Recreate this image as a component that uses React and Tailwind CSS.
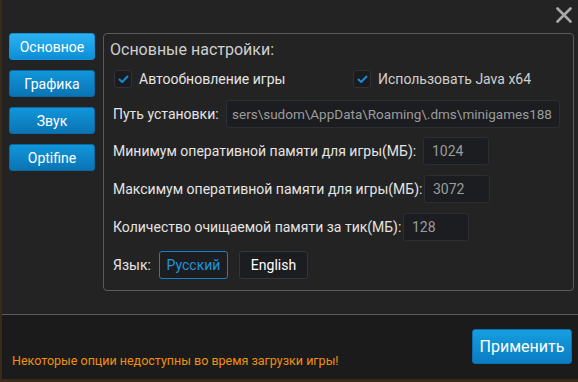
import { useState } from 'react';

const tabs = ['Основное', 'Графика', 'Звук', 'Optifine'];

const Check = ({ checked }) => (
    <span className="w-[18px] h-[18px] rounded-[3px] bg-[#1a1c1f] border border-[#303236] flex items-center justify-center">
        {checked && (
            <svg width="11" height="9" viewBox="0 0 11 9">
                <path d="M1.5 4.5 L4.2 7 L9.5 1.5" fill="none" stroke="#1b8ad4" strokeWidth="2" strokeLinecap="round" strokeLinejoin="round" />
            </svg>
        )}
    </span>
);

const Field = ({ value, className }) => (
    <div className={`h-[28px] rounded-[3px] bg-[#1b1d20] border border-[#2c2e31] text-[#9c9c9c] flex items-center overflow-hidden whitespace-nowrap ${className}`}>
        {value}
    </div>
);

const App = () => {
    const [tab, setTab] = useState(0);
    const [lang, setLang] = useState('ru');

    return (
        <div className="w-[578px] h-[382px] bg-[#3a2a19] flex flex-col overflow-hidden" style={{ fontFamily: 'Roboto, "Noto Sans", sans-serif' }}>
            <div className="ml-[2px] h-[379px] flex flex-col">
                {/* верх */}
                <div className="relative h-[315px] bg-[#232323] border-b border-[#5c5c5c] flex pt-[33px] pl-[7px]">
                    <svg className="absolute right-[6px] top-[7px]" width="16" height="16" viewBox="0 0 16 16">
                        <path d="M1.5 1.5 L14.5 14.5 M14.5 1.5 L1.5 14.5" stroke="#a9a9a9" strokeWidth="2.6" strokeLinecap="round" />
                    </svg>

                    <div className="w-[86px] flex flex-col gap-[10px]">
                        {tabs.map((t, i) => (
                            <button
                                key={t}
                                onClick={() => setTab(i)}
                                className={`h-[27px] rounded-[3px] border text-white text-[14px] leading-none ${i === tab ? 'bg-gradient-to-b from-[#2bb2f2] to-[#0b8ed6] border-[#1590d4]' : 'bg-gradient-to-b from-[#1196da] to-[#0a74b4] border-[#0b6aa6]'}`}
                            >
                                {t}
                            </button>
                        ))}
                    </div>

                    <div className="ml-[8px] w-[471px] h-[258px] border border-[#5a5a5a] rounded-[4px] flex flex-col pt-[5px] text-[#e4e4e4] text-[14px] whitespace-nowrap">
                        <div className="pl-[6px] h-[22px] flex items-center text-[16px] text-[#cfcfcf]">Основные настройки:</div>

                        <div className="mt-[9px] h-[18px] flex items-center pl-[10px]">
                            <div className="w-[239px] flex items-center gap-[7px]">
                                <Check checked />
                                <span>Автообновление игры</span>
                            </div>
                            <div className="flex items-center gap-[7px]">
                                <Check checked />
                                <span className="text-[#cfcfcf]">Использовать Java x64</span>
                            </div>
                        </div>

                        <div className="mt-[12px] flex items-center pl-[9px]">
                            <span className="w-[113px]">Путь установки:</span>
                            <Field value="sers\sudom\AppData\Roaming\.dms\minigames188" className="w-[334px] pl-[5px] text-[13.5px]" />
                        </div>

                        <div className="mt-[9px] flex items-center pl-[9px]">
                            <span className="w-[310px]">Минимум оперативной памяти для игры(МБ):</span>
                            <Field value="1024" className="w-[66px] px-[8px] text-[14px]" />
                        </div>

                        <div className="mt-[10px] flex items-center pl-[9px]">
                            <span className="w-[311px]">Максимум оперативной памяти для игры(МБ):</span>
                            <Field value="3072" className="w-[66px] px-[8px] text-[14px]" />
                        </div>

                        <div className="mt-[10px] flex items-center pl-[9px]">
                            <span className="w-[290px]">Количество очищаемой памяти за тик(МБ):</span>
                            <Field value="128" className="w-[66px] px-[8px] text-[14px]" />
                        </div>

                        <div className="mt-[10px] flex items-center pl-[9px] gap-[11px]">
                            <span className="w-[35px]">Язык:</span>
                            <button
                                onClick={() => setLang('ru')}
                                className={`h-[28px] w-[69px] rounded-[3px] bg-[#1b1d20] border text-[14px] ${lang === 'ru' ? 'border-[#1a80c4] text-[#1e95dc]' : 'border-[#34363a] text-white'}`}
                            >
                                Русский
                            </button>
                            <button
                                onClick={() => setLang('en')}
                                className={`h-[28px] w-[69px] rounded-[3px] bg-[#1b1d20] border text-[14px] ${lang === 'en' ? 'border-[#1a80c4] text-[#1e95dc]' : 'border-[#34363a] text-white'}`}
                            >
                                English
                            </button>
                        </div>
                    </div>
                </div>

                {/* низ */}
                <div className="flex-1 bg-[#1b1b1b] flex justify-between pl-[10px] pr-[6px] pt-[14px]">
                    <span className="self-end mb-[8px] text-[12.5px] text-[#f0900c]">Некоторые опции недоступны во время загрузки игры!</span>
                    <button className="w-[100px] h-[35px] rounded-[3px] bg-gradient-to-b from-[#169fe0] to-[#0a7cc2] border border-[#0b70ae] text-white text-[16px]">
                        Применить
                    </button>
                </div>
            </div>
        </div>
    );
};

export default App;
